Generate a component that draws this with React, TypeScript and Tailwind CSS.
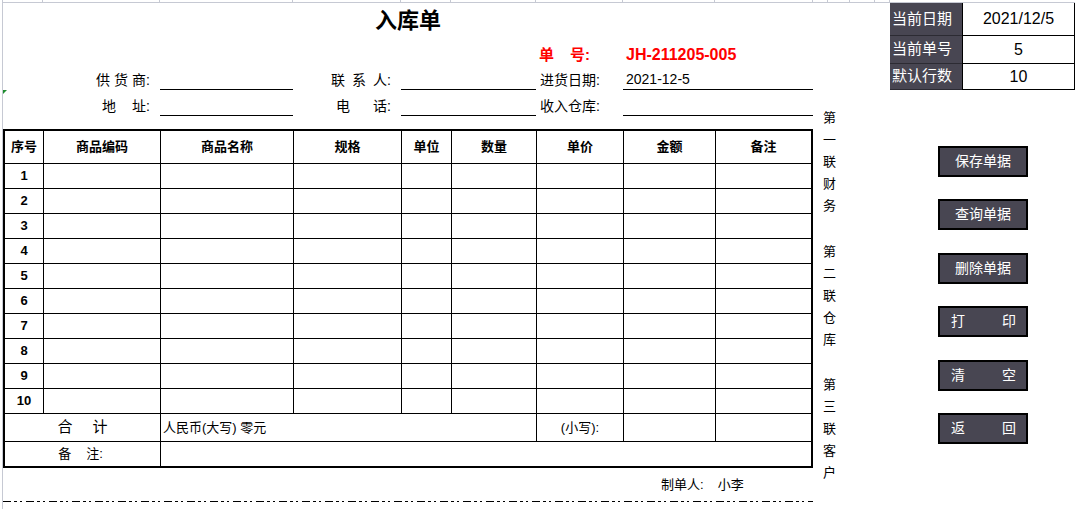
import React from "react"

const FONT = { fontFamily: '"Liberation Sans", "Noto Sans CJK SC", sans-serif' }
const COLS = "grid grid-cols-[40px_117px_133px_108px_50px_85px_87px_92px_98px]"
const TABLE_COLS = "grid grid-cols-[39px_117px_133px_108px_50px_85px_87px_92px_95px]"
const headers = ["序号", "商品编码", "商品名称", "规格", "单位", "数量", "单价", "金额", "备注"]
const rows = [1, 2, 3, 4, 5, 6, 7, 8, 9, 10]
const stripCols = [40, 117, 133, 108, 50, 85, 87, 92, 98, 15, 22, 25, 15]

const groups = [
  ["第", "一", "联", "财", "务"],
  ["第", "二", "联", "仓", "库"],
  ["第", "三", "联", "客", "户"],
]

const buttons: { label: string; spread?: [string, string] }[] = [
  { label: "保存单据" },
  { label: "查询单据" },
  { label: "删除单据" },
  { label: "打印", spread: ["打", "印"] },
  { label: "清空", spread: ["清", "空"] },
  { label: "返回", spread: ["返", "回"] },
]

const info = [
  { label: "当前日期", value: "2021/12/5", h: "h-[33px]" },
  { label: "当前单号", value: "5", h: "h-[28px]" },
  { label: "默认行数", value: "10", h: "h-[26px]" },
]

const Underline = ({ className = "", children }: { className?: string; children?: React.ReactNode }) => (
  <div className={`border-b border-black flex items-end pb-[1px] ${className}`}>{children}</div>
)

const App = () => {
  return (
    <div className="w-[1079px] h-[509px] overflow-hidden bg-white text-black flex pl-[2px]" style={FONT}>
      {/* sheet */}
      <div className="w-[888px] border-l border-[#c6c9d3] flex flex-col">
        <div className="flex h-[3px]">
          {stripCols.map((w, i) => (
            <div key={i} className="h-[3px] border-r border-b border-[#c6c9d3]" style={{ width: w }} />
          ))}
        </div>

        <div className="flex">
          <div className="w-[810px] flex flex-col">
            <div className="h-[36px] flex items-center justify-center text-[22px] font-bold leading-[28px]">
              入库单
            </div>

            <div className={`${COLS} h-[27px] items-end pb-[1px] text-[15px] font-bold text-[#ff0000] leading-[20px]`}>
              <div className="col-start-7 pl-[3px]">
                <span className="mr-[16px]">单</span>号:
              </div>
              <div className="col-span-2 pl-[3px] text-[16px]">JH-211205-005</div>
            </div>

            <div className={`${COLS} h-[24px] text-[14px] leading-[18px]`}>
              <div className="col-span-2 flex items-end justify-end pr-[10px] pb-[1px]">
                <span className="mr-[4px]">供</span>
                <span className="mr-[4px]">货</span>商:
              </div>
              <Underline />
              <div className="flex items-end justify-end pr-[10px] pb-[1px]">
                <span className="mr-[7px]">联</span>
                <span className="mr-[7px]">系</span>人:
              </div>
              <Underline className="col-span-2" />
              <div className="flex items-end pl-[4px] pb-[1px]">进货日期:</div>
              <Underline className="col-span-2 pl-[3px]">2021-12-5</Underline>
            </div>

            <div className={`${COLS} h-[26px] text-[14px] leading-[18px]`}>
              <div className="relative col-span-2 flex items-end justify-end pr-[10px] pb-[1px]">
                <div className="absolute left-0 top-0 w-0 h-0 border-t-[4px] border-r-[4px] border-t-[#1e8c2e] border-r-transparent" />
                <span className="mr-[16px]">地</span>址:
              </div>
              <Underline />
              <div className="flex items-end justify-end pr-[10px] pb-[1px]">
                <span className="mr-[23px]">电</span>话:
              </div>
              <Underline className="col-span-2" />
              <div className="flex items-end pl-[4px] pb-[1px]">收入仓库:</div>
              <Underline className="col-span-2" />
            </div>

            <div className="h-[13px]" />

            {/* main table */}
            <div className="w-[810px] border-2 border-black text-[13px]">
              <div className={`${TABLE_COLS} h-[33px] font-bold`}>
                {headers.map((h, i) => (
                  <div
                    key={h}
                    className={`flex items-center justify-center border-b border-black ${i < 8 ? "border-r" : ""}`}
                  >
                    {h}
                  </div>
                ))}
              </div>
              {rows.map((n) => (
                <div key={n} className={`${TABLE_COLS} h-[25px]`}>
                  {headers.map((h, i) => (
                    <div
                      key={h}
                      className={`flex items-center justify-center border-b border-black font-bold ${i < 8 ? "border-r" : ""}`}
                    >
                      {i === 0 ? n : null}
                    </div>
                  ))}
                </div>
              ))}
              <div className={`${TABLE_COLS} h-[28px]`}>
                <div className="col-span-2 flex items-center justify-center border-r border-b border-black text-[15px]">
                  <span className="mr-[20px]">合</span>计
                </div>
                <div className="col-span-4 flex items-center pl-[2px] border-r border-b border-black">
                  人民币(大写) 零元
                </div>
                <div className="flex items-center justify-center border-r border-b border-black">(小写):</div>
                <div className="border-r border-b border-black" />
                <div className="border-b border-black" />
              </div>
              <div className={`${TABLE_COLS} h-[24px]`}>
                <div className="col-span-2 flex items-center justify-center border-r border-black pr-[4px]">
                  <span className="mr-[15px]">备</span>注:
                </div>
                <div className="col-span-7" />
              </div>
            </div>

            <div className="h-[33px] flex items-center text-[13px] pl-[658px]">
              <span>制单人:</span>
              <span className="ml-[14px]">小李</span>
            </div>
            <svg width="810" height="1" className="block">
              <line
                x1="0"
                y1="0.5"
                x2="810"
                y2="0.5"
                stroke="#000"
                strokeWidth="1"
                strokeDasharray="8 3 3 3 2 4"
                shapeRendering="crispEdges"
              />
            </svg>
          </div>

          {/* vertical side captions */}
          <div className="w-[77px] pt-[104px] pl-[10px] text-[13px] flex flex-col">
            {groups.map((g, gi) => (
              <div key={gi} className={gi === 0 ? "" : gi === 1 ? "mt-[24px]" : "mt-[23px]"}>
                {g.map((c, ci) => (
                  <div key={ci} className="h-[22px] leading-[22px]">
                    {c}
                  </div>
                ))}
              </div>
            ))}
          </div>
        </div>
      </div>

      {/* control panel */}
      <div className="w-[189px] pt-[2px] flex flex-col">
        <div className="w-[185px] border-t border-[#c6c9d3] text-[15px]">
          {info.map((r) => (
            <div key={r.label} className={`grid grid-cols-[72px_113px] ${r.h}`}>
              <div className="bg-[#484652] text-white flex items-center pl-[2px] border-b border-[#2c2b33]">
                {r.label}
              </div>
              <div className="flex items-center justify-center border-l border-r border-b border-black text-[16px]">
                {r.value}
              </div>
            </div>
          ))}
        </div>

        <div className="mt-[56px] ml-[48px] flex flex-col gap-[22.4px]">
          {buttons.map((b) => (
            <div
              key={b.label}
              className={`w-[90px] h-[31px] border-2 border-black bg-[#484652] text-white text-[14px] flex items-center ${
                b.spread ? "justify-between pl-[11px] pr-[10px]" : "justify-center"
              }`}
            >
              {b.spread ? (
                <>
                  <span>{b.spread[0]}</span>
                  <span>{b.spread[1]}</span>
                </>
              ) : (
                b.label
              )}
            </div>
          ))}
        </div>
      </div>
    </div>
  )
}

export default App
